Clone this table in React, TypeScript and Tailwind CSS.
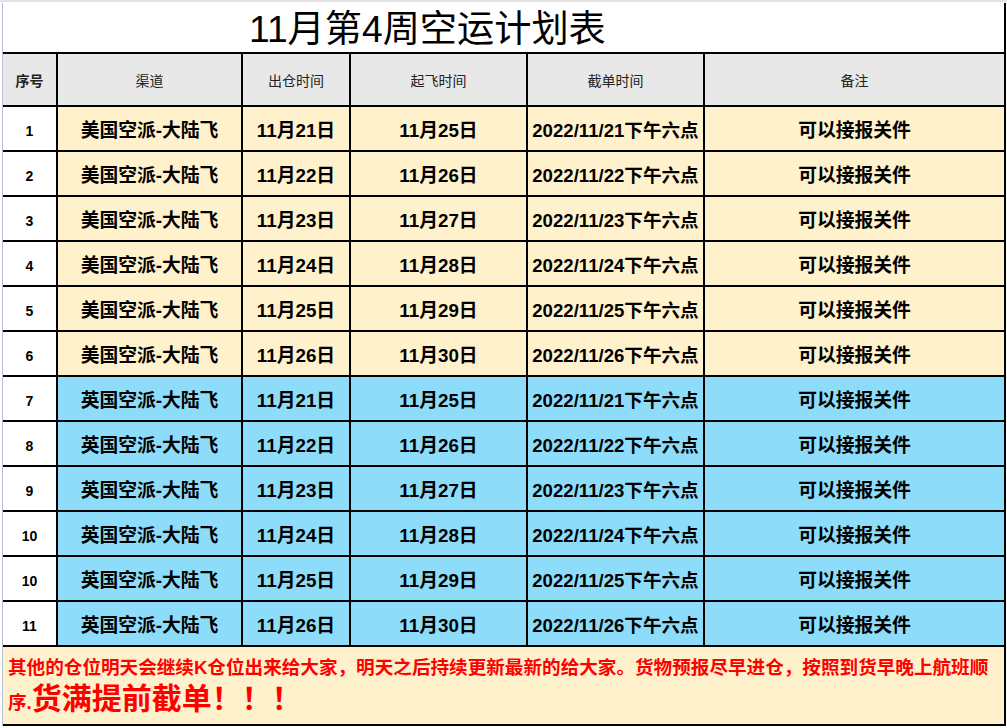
import React from "react";

const rows = [
  { n: "1", ch: "美国空派-大陆飞", out: "11月21日", fly: "11月25日", cut: "2022/11/21下午六点", c: "y" },
  { n: "2", ch: "美国空派-大陆飞", out: "11月22日", fly: "11月26日", cut: "2022/11/22下午六点", c: "y" },
  { n: "3", ch: "美国空派-大陆飞", out: "11月23日", fly: "11月27日", cut: "2022/11/23下午六点", c: "y" },
  { n: "4", ch: "美国空派-大陆飞", out: "11月24日", fly: "11月28日", cut: "2022/11/24下午六点", c: "y" },
  { n: "5", ch: "美国空派-大陆飞", out: "11月25日", fly: "11月29日", cut: "2022/11/25下午六点", c: "y" },
  { n: "6", ch: "美国空派-大陆飞", out: "11月26日", fly: "11月30日", cut: "2022/11/26下午六点", c: "y" },
  { n: "7", ch: "英国空派-大陆飞", out: "11月21日", fly: "11月25日", cut: "2022/11/21下午六点", c: "b" },
  { n: "8", ch: "英国空派-大陆飞", out: "11月22日", fly: "11月26日", cut: "2022/11/22下午六点", c: "b" },
  { n: "9", ch: "英国空派-大陆飞", out: "11月23日", fly: "11月27日", cut: "2022/11/23下午六点", c: "b" },
  { n: "10", ch: "英国空派-大陆飞", out: "11月24日", fly: "11月28日", cut: "2022/11/24下午六点", c: "b" },
  { n: "10", ch: "英国空派-大陆飞", out: "11月25日", fly: "11月29日", cut: "2022/11/25下午六点", c: "b" },
  { n: "11", ch: "英国空派-大陆飞", out: "11月26日", fly: "11月30日", cut: "2022/11/26下午六点", c: "b" },
];

const font = { fontFamily: '"Liberation Sans", "Noto Sans CJK SC", sans-serif' };

export default function App() {
  return (
    <div className="w-[1007px] h-[728px] bg-white overflow-hidden text-black" style={font}>
      <div className="h-[3px] border-t-[2px] border-[#e3e3e3]" />
      <div className="ml-[2px] w-[1004px] border-l border-[#b9c0d4]">
        <div className="h-[51px] border-r-[2px] border-b-[2px] border-black flex items-center pl-[246px] pt-[4px]">
          <span className="text-[37.2px] leading-none">11月第4周空运计划表</span>
        </div>
        <div className="grid grid-cols-[55px_185px_108px_177px_177px_1fr] border-r-[2px] border-black">
          {["序号", "渠道", "出仓时间", "起飞时间", "截单时间", "备注"].map((h, i) => (
            <div
              key={i}
              className={`h-[53px] pt-[3px] bg-[#e8e8e8] flex items-center justify-center text-[14px] text-[#222] border-b-[2px] border-black ${i < 5 ? "border-r-[2px]" : ""} ${i === 0 ? "font-bold" : ""}`}
            >
              {h}
            </div>
          ))}
          {rows.map((r, ri) => {
            const bg = r.c === "y" ? "bg-[#fff1cc]" : "bg-[#8ddcf9]";
            return (
              <React.Fragment key={ri}>
                <div className="h-[45px] pt-[5px] bg-white flex items-center justify-center text-[14px] font-bold border-r-[2px] border-b-[2px] border-black">
                  {r.n}
                </div>
                <div className={`h-[45px] pt-[5px] ${bg} flex items-center justify-center text-[18.8px] font-bold border-r-[2px] border-b-[2px] border-black`}>
                  {r.ch}
                </div>
                <div className={`h-[45px] pt-[5px] ${bg} flex items-center justify-center text-[18.8px] font-bold border-r-[2px] border-b-[2px] border-black`}>
                  {r.out}
                </div>
                <div className={`h-[45px] pt-[5px] ${bg} flex items-center justify-center text-[18.8px] font-bold border-r-[2px] border-b-[2px] border-black`}>
                  {r.fly}
                </div>
                <div className={`h-[45px] pt-[5px] ${bg} flex items-center justify-center text-[18.6px] font-bold border-r-[2px] border-b-[2px] border-black whitespace-nowrap`}>
                  {r.cut}
                </div>
                <div className={`h-[45px] pt-[5px] ${bg} flex items-center justify-center text-[18.8px] font-bold border-b-[2px] border-black`}>
                  可以接报关件
                </div>
              </React.Fragment>
            );
          })}
        </div>
        <div className="h-[79px] bg-[#fff1cc] border-r-[2px] border-b-[2px] border-black pl-[5px] pt-[9px] text-[#ff0000] font-bold">
          <div className="text-[18.6px] leading-[24px] whitespace-nowrap">
            其他的仓位明天会继续K仓位出来给大家，明天之后持续更新最新的给大家。货物预报尽早进仓，按照到货早晚上航班顺
          </div>
          <div className="leading-[38px] whitespace-nowrap">
            <span className="text-[18.6px]">序.</span>
            <span className="text-[30px]">货满提前截单！！！</span>
          </div>
        </div>
      </div>
    </div>
  );
}
